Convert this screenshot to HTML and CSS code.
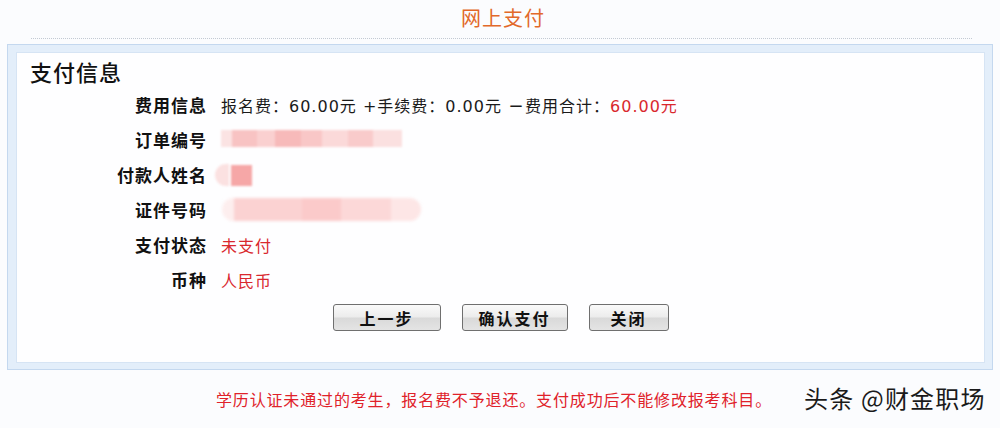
FILE: index.html
```html
<!DOCTYPE html>
<html lang="zh-CN">
<head>
<meta charset="utf-8">
<title>网上支付</title>
<link rel="stylesheet" href="styles.css">
</head>
<body>
<div class="page">
  <header class="top">
    <h1 class="title">网上支付</h1>
    <div class="dots"></div>
  </header>
  <section class="frame">
    <div class="panel">
      <h2 class="heading">支付信息</h2>
      <div class="rows">
        <div class="label">费用信息</div>
        <div class="value">报名费：60.00元 +手续费：0.00元 <span class="dash">－</span>费用合计：<span class="red">60.00元</span></div>
        <div class="label">订单编号</div>
        <div class="value"><span class="blur blur-order"></span></div>
        <div class="label">付款人姓名</div>
        <div class="value"><span class="blur blur-name"><span class="blur-round"></span><span class="blur-square"></span></span></div>
        <div class="label">证件号码</div>
        <div class="value"><span class="blur blur-id"></span></div>
        <div class="label">支付状态</div>
        <div class="value red">未支付</div>
        <div class="label">币种</div>
        <div class="value red">人民币</div>
      </div>
      <div class="buttons">
        <button class="btn btn-prev" type="button">上一步</button>
        <button class="btn btn-pay" type="button">确认支付</button>
        <button class="btn btn-close" type="button">关闭</button>
      </div>
    </div>
  </section>
  <footer class="foot">
    <p class="notice">学历认证未通过的考生，报名费不予退还。支付成功后不能修改报考科目。</p>
    <span class="mark">头条 @财金职场</span>
  </footer>
</div>
</body>
</html>
```

FILE: styles.css
```css
* { box-sizing: border-box; }
html, body { margin: 0; padding: 0; }
body {
  background: #fbfcfe;
  font-family: "Noto Sans CJK SC", "DejaVu Sans", sans-serif;
  color: #111;
  width: 1000px;
  height: 428px;
  overflow: hidden;
}
.page { position: relative; width: 1000px; height: 428px; }

.top { height: 44px; padding-top: 4px; }
.title {
  margin: 0;
  text-align: center;
  font-size: 20px;
  font-weight: normal;
  line-height: 28px;
  letter-spacing: 1px;
  color: #e2692a;
  padding-left: 6px;
}
.dots {
  margin: 6px 28px 0 31px;
  height: 1px;
  border-top: 1px dotted #c3cad3;
}

.frame {
  margin: 0 7px 0 7px;
  width: 986px;
  height: 326px;
  border: 1px solid #c4d8ef;
  background: #e3eefa;
  padding: 7px 7px 6px 8px;
}
.panel {
  height: 100%;
  background: #fefeff;
  border: 1px solid #d6e4f4;
  padding: 3px 0 0 13px;
}
.heading {
  margin: 0;
  font-size: 22px;
  font-weight: 500;
  line-height: 30px;
  letter-spacing: 1px;
  color: #111;
}
.rows {
  display: grid;
  grid-template-columns: 177px 1fr;
  grid-auto-rows: 35px;
  column-gap: 14px;
  align-items: center;
  margin-top: 1px;
}
.label {
  text-align: right;
  font-size: 17px;
  font-weight: bold;
  letter-spacing: 1px;
  color: #111;
}
.value {
  font-family: "DejaVu Sans", "Noto Sans CJK SC", sans-serif;
  font-size: 16px;
  letter-spacing: 1px;
  color: #1a1a1a;
  display: flex;
  align-items: center;
  white-space: pre;
}
.value.red, .red { color: #d9282e; }
.dash { font-weight: bold; }

.blur { display: block; }
.blur-order {
  width: 181px;
  height: 17px;
  margin-top: -2px;
  background:
    linear-gradient(90deg,
      #fbe3e3 0 6%, #f8c3c3 6% 20%, #fad0d0 20% 30%, #f7baba 30% 44%,
      #f9c7c7 44% 56%, #fbd9d9 56% 70%, #f9cbcb 70% 84%, #fbe0e0 84% 100%);
  filter: blur(1.2px);
}
.blur-name {
  display: flex;
  align-items: center;
  margin-left: -6px;
  height: 24px;
}
.blur-round {
  width: 14px;
  height: 22px;
  border-radius: 11px 0 0 11px;
  background: #fbe1e1;
  filter: blur(1px);
}
.blur-square {
  width: 21px;
  height: 21px;
  margin-left: 2px;
  margin-top: 2px;
  background: #f6a7a7;
  filter: blur(0.8px);
}
.blur-id {
  width: 199px;
  height: 23px;
  border-radius: 12px;
  background:
    linear-gradient(90deg,
      #fdeeee 0 6%, #fbd2d2 6% 40%, #fbcaca 40% 60%, #fcd8d8 60% 85%, #fde6e6 85% 100%);
  filter: blur(1.5px);
  margin-left: 1px;
}

.buttons {
  display: flex;
  justify-content: center;
  gap: 21px;
  margin-top: 7px;
  padding-right: 13px;
}
.btn {
  height: 27px;
  border: 1px solid #6f6f6f;
  border-radius: 3px;
  background: linear-gradient(#fafafa 0%, #ececec 48%, #d9d9d9 52%, #e4e4e4 100%);
  font-family: "Noto Sans CJK SC", sans-serif;
  font-size: 16px;
  font-weight: bold;
  letter-spacing: 2px;
  color: #111;
  padding: 0;
  line-height: 24px;
}
.btn-prev { width: 108px; }
.btn-pay { width: 106px; }
.btn-close { width: 80px; }

.foot {
  margin-top: 17px;
  height: 24px;
}
.notice {
  margin: 0;
  text-align: center;
  font-size: 16px;
  letter-spacing: 0.85px;
  line-height: 24px;
  color: #e0222a;
  padding-right: 12px;
}
.mark {
  position: absolute;
  left: 804px;
  top: 383px;
  font-family: "Noto Sans CJK SC", sans-serif;
  font-size: 24px;
  line-height: 30px;
  letter-spacing: 1.2px;
  color: #1a1a1a;
  white-space: nowrap;
}
```
